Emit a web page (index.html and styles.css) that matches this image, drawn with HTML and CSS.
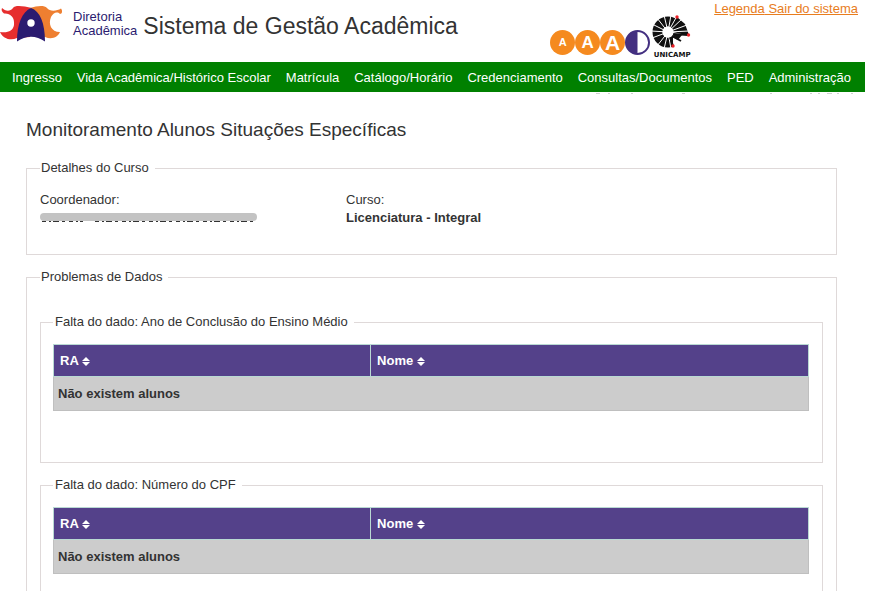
FILE: index.html
```html
<!DOCTYPE html>
<html lang="pt-BR">
<head>
<meta charset="utf-8">
<title>Sistema de Gestão Acadêmica</title>
<link rel="stylesheet" href="styles.css">
</head>
<body>
<div class="page">
  <header class="header">
    <svg class="logo" viewBox="0 0 64 44" width="64" height="44" aria-hidden="true">
      <path fill="#e62e2e" d="M2 8C5 11 10 12 13 8C15 5 23 6 32 8L30 37L17 38C11 41 3 39 0 32C8 33 13 31 14 25C15 17 10 13 4 13.500C2 12 1 10 2 8Z"/>
      <path fill="#ee7f31" d="M30 8C37 6 44 5 47 8C50 12 57 11 61 8.500C63 11 62 14 60 14C57 11 53 13 51 17C48 24 51 32 60 32C58 37 52 40 45 37L32 36Z"/>
      <path fill="#2b1b70" d="M31 8C40 11 45 23 45 41.500C36 35 26 35 17 41.500C17 24 22 12 31 8Z"/>
      <circle cx="31" cy="23" r="3.700" fill="#fff"/>
    </svg>
    <div class="brand">Diretoria<br>Acadêmica</div>
    <h1 class="title">Sistema de Gestão Acadêmica</h1>
    <div class="tools">
      <button class="size small" type="button" aria-label="Diminuir texto">A</button>
      <button class="size medium" type="button" aria-label="Texto normal">A</button>
      <button class="size large" type="button" aria-label="Aumentar texto">A</button>
      <button class="contrast" type="button" aria-label="Contraste">
        <svg viewBox="0 0 26 26" width="25" height="25" aria-hidden="true">
          <circle cx="13" cy="13" r="12" fill="#fff" stroke="#432f80" stroke-width="2"/>
          <path fill="#432f80" d="M13 1 A12 12 0 0 0 13 25Z"/>
        </svg>
      </button>
      <div class="unicamp">
        <svg viewBox="0 0 40 36" width="40" height="36" aria-hidden="true">
          <circle cx="16" cy="17" r="10.500" fill="none" stroke="#111" stroke-width="10"/>
          <path fill="#111" d="M16 17L25 2L33 9L37 20Z"/>
          <path stroke="#fff" stroke-width="1" d="M16 17L19 0M16 17L12 0M16 17L5 3M16 17L0 9M16 17L-1 16M16 17L0 23M16 17L5 31M16 17L12 34M16 17L19 34M16 17L25 1M16 17L30 4M16 17L35 10M16 17L37 16"/>
          <path fill="#fff" d="M21 17L38 21L30 35L21 32Z"/>
          <path fill="none" stroke="#111" stroke-width="2" d="M21 19L36 20M20 21L29 26M18 22L21 31"/>
          <path fill="#111" d="M22 19L30 20L26 25L20 22Z"/>
          <circle cx="16" cy="17" r="5.500" fill="#fff"/>
          <g fill="#ec2027"><circle cx="25" cy="2" r="1.700"/><circle cx="36.500" cy="20" r="1.700"/><circle cx="21" cy="31" r="1.700"/></g>
        </svg>
        <span class="unicamp-name">UNICAMP</span>
      </div>
    </div>
    <div class="links"><a href="#legenda">Legenda</a><a href="#sair"> Sair do sistema</a></div>
  </header>

  <nav class="nav">
    <a href="#ingresso">Ingresso</a>
    <a href="#vida">Vida Acadêmica/Histórico Escolar</a>
    <a href="#matricula">Matrícula</a>
    <a href="#catalogo">Catálogo/Horário</a>
    <a href="#credenciamento">Credenciamento</a>
    <a href="#consultas">Consultas/Documentos</a>
    <a href="#ped">PED</a>
    <a href="#administracao">Administração</a>
  </nav>
  <svg class="ticks" width="270" height="2" viewBox="0 0 270 2" aria-hidden="true">
    <path stroke="#d0d0d0" stroke-width="1" d="M1 1.5h4M13 1.5h2M36 1.5h2M87 1.5h3M175 1.5h2M215 1.5h2M223 1.5h2M232 1.5h5M242 1.5h2M256 1.5h2"/>
  </svg>

  <main class="main">
    <h2 class="heading">Monitoramento Alunos Situações Específicas</h2>

    <fieldset class="box details">
      <legend>Detalhes do Curso</legend>
      <dl class="fields">
        <div>
          <dt>Coordenador:</dt>
          <dd>
            <svg class="redacted" viewBox="0 0 218 11" width="218" height="11" role="img" aria-label="Nome oculto">
              <path stroke="#333" stroke-width="1" stroke-dasharray="4 3 2 2 6 3 3 4" d="M2 9.500H43M55 9.500H214"/>
              <path stroke="#c3c3c3" stroke-width="8" stroke-linecap="round" d="M4 5H213"/>
            </svg>
          </dd>
        </div>
        <div>
          <dt>Curso:</dt>
          <dd class="strong">Licenciatura - Integral</dd>
        </div>
      </dl>
    </fieldset>

    <fieldset class="box problems">
      <legend>Problemas de Dados</legend>

      <fieldset class="box group">
        <legend>Falta do dado: Ano de Conclusão do Ensino Médio</legend>
        <table class="table">
          <thead>
            <tr>
              <th class="ra" scope="col">RA <svg class="sort" viewBox="0 0 8 9" width="8" height="9" aria-hidden="true"><path d="M4 0L8 4H0ZM0 5H8L4 9Z"/></svg></th>
              <th scope="col">Nome <svg class="sort" viewBox="0 0 8 9" width="8" height="9" aria-hidden="true"><path d="M4 0L8 4H0ZM0 5H8L4 9Z"/></svg></th>
            </tr>
          </thead>
          <tbody><tr><td colspan="2">Não existem alunos</td></tr></tbody>
        </table>
      </fieldset>

      <fieldset class="box group">
        <legend>Falta do dado: Número do CPF</legend>
        <table class="table">
          <thead>
            <tr>
              <th class="ra" scope="col">RA <svg class="sort" viewBox="0 0 8 9" width="8" height="9" aria-hidden="true"><path d="M4 0L8 4H0ZM0 5H8L4 9Z"/></svg></th>
              <th scope="col">Nome <svg class="sort" viewBox="0 0 8 9" width="8" height="9" aria-hidden="true"><path d="M4 0L8 4H0ZM0 5H8L4 9Z"/></svg></th>
            </tr>
          </thead>
          <tbody><tr><td colspan="2">Não existem alunos</td></tr></tbody>
        </table>
      </fieldset>
    </fieldset>
  </main>
</div>
</body>
</html>
```
FILE: styles.css
```css
* { box-sizing: border-box; }
html { scrollbar-width: none; }
body {
  margin: 0;
  background: #fff;
  color: #333;
  font: 13px/16px "Liberation Sans", Arial, sans-serif;
}
.page { margin-right: 10px; }

.header {
  display: flex;
  align-items: flex-start;
  height: 62px;
}
.logo { flex: none; }
.brand {
  margin: 10px 6px 0 9px;
  color: #2b1b70;
  line-height: 14px;
}
.title {
  margin: 12px 0 0;
  font-size: 23px;
  line-height: 28px;
  font-weight: normal;
  white-space: nowrap;
}
.tools {
  display: flex;
  align-items: flex-start;
  margin: 15px 0 0 auto;
}
.size, .contrast {
  width: 25px;
  height: 25px;
  margin: 15px 0 0;
  padding: 0;
  border: 0;
  border-radius: 50%;
  background: #f58a1f;
  color: #fff;
  font-family: inherit;
  font-weight: bold;
  line-height: 25px;
  text-align: center;
}
.contrast { background: none; }
.contrast svg { display: block; }
.small { font-size: 11px; }
.medium { font-size: 17px; }
.large { font-size: 21px; }
.unicamp {
  display: flex;
  flex-direction: column;
  align-items: center;
  width: 40px;
  margin-left: 2px;
}
.unicamp svg { display: block; }
.unicamp-name {
  color: #111;
  font-family: "DejaVu Sans", sans-serif;
  font-size: 7px;
  line-height: 9px;
  font-weight: bold;
}
.links {
  margin: 1px 7px 0 22px;
  white-space: pre;
}
.links a { color: #e87d1e; }

.nav {
  display: flex;
  justify-content: space-between;
  padding: 2px 14px 0 12px;
  background: #008000;
  line-height: 28px;
  white-space: nowrap;
}
.nav a { color: #fff; text-decoration: none; }
.ticks { display: block; margin: 0 0 0 auto; }

.main { padding: 24px 28px 0 26px; }
.heading {
  margin: 0 0 18px;
  font-size: 19px;
  line-height: 24px;
  font-weight: normal;
}

.box {
  min-width: 0;
  margin: 0 0 14px;
  border: 1px solid #dfd9d9;
}
.box legend { padding: 0 6px 0 1px; }
.details { padding: 15px 13px 27px; }
.problems { padding: 29px 13px 14px; }
.group { padding: 14px 13px 51px 12px; }
.group legend { padding-left: 2px; }

.fields {
  display: grid;
  grid-template-columns: 306px 1fr;
  margin: 0;
  line-height: 18px;
}
.fields dd { margin: 0; }
.strong { font-weight: bold; }
.redacted { display: block; margin-top: 3px; }

.table {
  width: 100%;
  border-collapse: collapse;
  font-weight: bold;
}
.table th {
  height: 32px;
  padding: 0 6px;
  border: 1px solid #b9d9d3;
  background: #54418a;
  color: #fff;
  text-align: left;
}
.table .ra { width: 42%; }
.table td {
  height: 34px;
  padding: 0 4px;
  border: 1px solid #bfbfbf;
  background: #ccc;
}
.sort { fill: #fff; vertical-align: -1px; }
```
